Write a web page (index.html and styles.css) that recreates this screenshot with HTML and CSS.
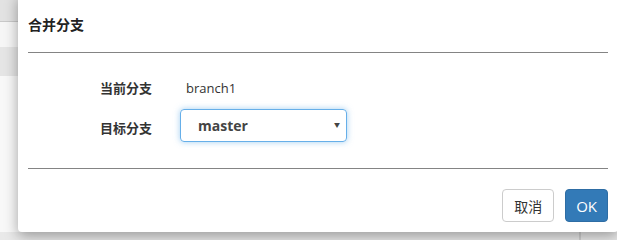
FILE: index.html
```html
<!DOCTYPE html>
<html lang="zh-CN">
<head>
    <meta charset="UTF-8">
    <meta name="viewport" content="width=device-width, initial-scale=1.0">
    <title>合并分支</title>
    <link rel="stylesheet" href="styles.css">
</head>
<body>
    <div class="page">
        <div class="page-bar"></div>
        <div class="page-row"></div>
        <div class="page-row active"></div>
        <div class="page-rest"></div>
        <div class="page-foot">
            <div class="foot-line"></div>
        </div>
    </div>

    <div class="modal">
        <div class="modal-header">
            <h4 class="modal-title">合并分支</h4>
        </div>
        <div class="modal-body">
            <div class="form-row">
                <label class="form-label">当前分支</label>
                <span class="form-value">branch1</span>
            </div>
            <div class="form-row">
                <label class="form-label">目标分支</label>
                <div class="select">
                    <span class="select-text">master</span>
                    <span class="select-arrow">▼</span>
                </div>
            </div>
        </div>
        <div class="modal-footer">
            <button class="btn btn-default">取消</button>
            <button class="btn btn-primary">OK</button>
        </div>
    </div>
</body>
</html>
```

FILE: styles.css
```css
html, body {
    margin: 0;
    height: 100%;
    overflow: hidden;
}
body {
    background: #f7f7f7;
    font-family: "Open Sans", "Noto Sans CJK SC", sans-serif;
    font-size: 13px;
    color: #333;
}
.page {
    height: 240px;
    display: flex;
    flex-direction: column;
}
.page-bar {
    height: 21px;
    background: #e2e2e2;
    border-bottom: 1px solid #c9c9c9;
}
.page-row {
    height: 25px;
    background: #f6f6f6;
}
.page-row.active {
    height: 29px;
    background: #e5e5e5;
}
.page-rest {
    flex: 1;
    background: #f8f8f8;
}
.page-foot {
    height: 8px;
    background: #e9e9e9;
    position: relative;
}
.foot-line {
    position: absolute;
    left: 579px;
    top: 0;
    bottom: 0;
    width: 2px;
    background: #d0d0d0;
}

/* dialog */
.modal {
    position: absolute;
    left: 18px;
    top: -6px;
    width: 600px;
    padding: 0 10px 10px;
    box-sizing: border-box;
    background: #fff;
    border-radius: 4px;
    box-shadow: 0 4px 14px rgba(0, 0, 0, 0.35);
}
.modal-header {
    padding-top: 21px;
    padding-bottom: 17px;
    border-bottom: 1px solid #848484;
}
.modal-title {
    margin: 0;
    font-size: 14px;
    line-height: 20px;
    font-weight: bold;
    color: #222;
}
.modal-body {
    padding: 23px 0 26px 72px;
    border-bottom: 1px solid #848484;
}
.form-row {
    display: flex;
    align-items: center;
}
.form-row + .form-row {
    margin-top: 9px;
}
.form-label {
    width: 80px;
    font-weight: bold;
    line-height: 24px;
}
.form-row + .form-row .form-label {
    align-self: flex-start;
    margin-top: 7px;
}
.form-value {
    padding-left: 6px;
    line-height: 24px;
}
.select {
    width: 167px;
    height: 33px;
    box-sizing: border-box;
    border: 1px solid #66afe9;
    border-radius: 4px;
    box-shadow: 0 0 6px rgba(102, 175, 233, 0.6);
    display: flex;
    align-items: center;
    justify-content: space-between;
    padding: 0 6px 0 17px;
}
.select-text {
    font-weight: bold;
    font-size: 14px;
    color: #444;
}
.select-arrow {
    font-size: 6px;
    color: #444;
    margin-top: -3px;
}
.modal-footer {
    padding-top: 20px;
    display: flex;
    justify-content: flex-end;
    gap: 11px;
}
.btn {
    height: 33px;
    padding: 0 11px;
    border-radius: 4px;
    font-family: "Open Sans", "Noto Sans CJK SC", sans-serif;
    font-size: 14px;
    border: 1px solid #ccc;
    background: #fff;
    color: #333;
}
.btn-primary {
    background: #337ab7;
    border-color: #2e6da4;
    color: #fff;
    padding: 0 10px;
    font-size: 15px;
}
```
